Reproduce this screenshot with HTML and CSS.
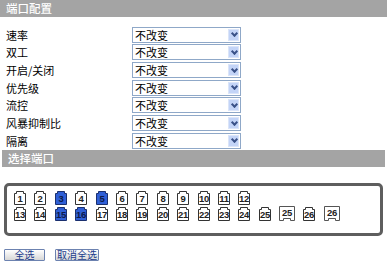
FILE: index.html
```html
<!DOCTYPE html>
<html lang="zh-CN">
<head>
  <meta charset="UTF-8" />
  <title>端口配置</title>
  <link rel="stylesheet" href="styles.css">
</head>
<body>
  <div class="panel-title wide">端口配置</div>
  <div class="form">
    <div class="row"><span class="label">速率</span><div class="select"><span>不改变</span><i class="arrow"></i></div></div>
    <div class="row"><span class="label">双工</span><div class="select"><span>不改变</span><i class="arrow"></i></div></div>
    <div class="row"><span class="label">开启/关闭</span><div class="select"><span>不改变</span><i class="arrow"></i></div></div>
    <div class="row"><span class="label">优先级</span><div class="select"><span>不改变</span><i class="arrow"></i></div></div>
    <div class="row"><span class="label">流控</span><div class="select"><span>不改变</span><i class="arrow"></i></div></div>
    <div class="row"><span class="label">风暴抑制比</span><div class="select"><span>不改变</span><i class="arrow"></i></div></div>
    <div class="row"><span class="label">隔离</span><div class="select"><span>不改变</span><i class="arrow"></i></div></div>
  </div>
  <div class="panel-title">选择端口</div>
  <div class="port-box">
    <div class="port-row" id="row1"></div>
    <div class="port-row" id="row2"></div>
  </div>
  <div class="buttons">
    <button class="btn">全选</button>
    <button class="btn">取消全选</button>
  </div>

  <script>
    const selected = [3, 5, 15, 16];

    function makePort(num, fiber) {
      const el = document.createElement("div");
      el.className = "port" + (fiber ? " fiber" : "") + (selected.includes(num) && !fiber ? " on" : "");
      let shape;
      if (fiber) {
        shape = '<svg width="16" height="15"><path d="M0.5 0.5 H15.5 V14.5 H11.5 V12.5 H4.5 V14.5 H0.5 Z"/>' +
                '<text x="8" y="9.5">' + num + '</text></svg>';
      } else {
        shape = '<svg width="12" height="14"><path d="M0.5 13.5 V2.5 H2.5 V0.5 H9.5 V2.5 H11.5 V13.5 Z"/>' +
                '<text x="6" y="11">' + num + '</text></svg>';
      }
      el.innerHTML = shape;
      return el;
    }

    const row1 = document.getElementById("row1");
    const row2 = document.getElementById("row2");
    for (let i = 1; i <= 12; i++) row1.appendChild(makePort(i, false));
    for (let i = 13; i <= 24; i++) row2.appendChild(makePort(i, false));
    row2.appendChild(makePort(25, false));
    row2.appendChild(makePort(25, true));
    row2.appendChild(makePort(26, false));
    row2.appendChild(makePort(26, true));
  </script>
</body>
</html>
```

FILE: styles.css
```css
body {
  margin: 0;
  font-family: "Noto Sans CJK SC", "Liberation Sans", sans-serif;
  font-size: 11px;
  color: #000;
  background: #fff;
}

.panel-title {
  background: #a4a4a4;
  color: #fff;
  height: 17px;
  line-height: 17px;
  padding-left: 6px;
  margin: 0 2px 0 2px;
  font-size: 11.5px;
  font-weight: 500;
}

.panel-title.wide {
  margin: 0;
}

.form {
  padding: 9px 0 0 6px;
}

.row {
  display: flex;
  align-items: center;
  height: 17.67px;
}

.label {
  width: 126px;
  line-height: 16px;
}

.select {
  width: 105px;
  height: 14px;
  border: 1px solid #8fa8c8;
  display: flex;
  align-items: center;
  justify-content: space-between;
  padding-left: 2px;
  box-sizing: content-box;
  background: #fff;
}

.select span {
  line-height: 14px;
}

.arrow {
  width: 11px;
  height: 12px;
  margin-right: 1px;
  background: #c3d4f7;
  border: 1px solid #dbe5f9;
  box-sizing: border-box;
  position: relative;
}

.arrow::after {
  content: "";
  position: absolute;
  left: 2.5px;
  top: 1.5px;
  width: 3px;
  height: 3px;
  border-right: 2px solid #3a5288;
  border-bottom: 2px solid #3a5288;
  transform: rotate(45deg);
}

.port-box {
  margin: 16px 4px 0 4px;
  border: 3px solid #5e5e5e;
  border-radius: 5px;
  padding: 5px 8px 12px 7px;
  height: 30px;
}

.port-row {
  display: flex;
  align-items: flex-end;
  gap: 8.4px;
  height: 14px;
  margin-bottom: 2px;
}

.port svg {
  display: block;
  overflow: visible;
}

.port path {
  fill: #fff;
  stroke: #333;
  stroke-width: 1;
}

.port.fiber path {
  stroke: #555;
}

.port.on path {
  fill: #2f5fd6;
  stroke: #1a2f6e;
}

.port text {
  font-family: "Liberation Sans", Arial, sans-serif;
  font-size: 9.5px;
  font-weight: bold;
  letter-spacing: -0.3px;
  text-anchor: middle;
  fill: #222;
}

.port.on text {
  fill: #0c1a4a;
}

.buttons {
  display: flex;
  gap: 10px;
  padding: 13px 0 0 4px;
}

.btn {
  font-family: "Noto Sans CJK SC", sans-serif;
  font-size: 10px;
  color: #1c3c8c;
  height: 12px;
  min-width: 41px;
  padding: 0 1px;
  line-height: 10px;
  border: 1px solid #6c82b0;
  border-radius: 1px;
  background: linear-gradient(#ffffff, #d6d6d6);
}
```
